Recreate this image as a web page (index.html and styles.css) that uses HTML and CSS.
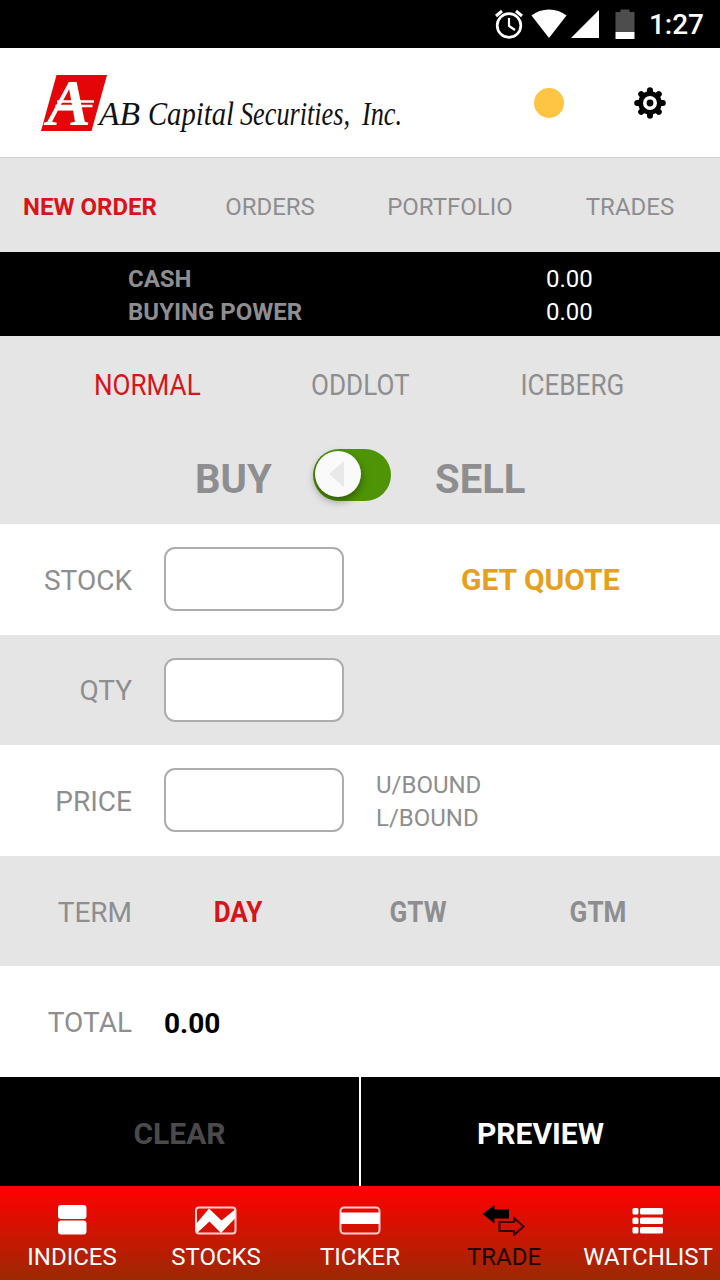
FILE: index.html
```
<!DOCTYPE html>
<html lang="en">
  <head>
    <meta charset="UTF-8" />
    <meta name="viewport" content="width=device-width, initial-scale=1.0" />
    <title>AB Capital Securities, Inc.</title>
    <link rel="stylesheet" href="styles.css">
  </head>
  <body>
    <div class="status-bar">
      <svg class="status-icons" width="145" height="48" viewBox="0 0 145 48">
        <g fill="none" stroke="#fff">
          <circle cx="15" cy="25.500" r="11.800" stroke-width="2.700" />
          <path d="M15 18v8l6 4" stroke-width="2.200" />
          <path d="M2 16l6-5M28 16l-6-5" stroke-width="3" />
        </g>
        <path d="M37.500 15.500C47 7.500 63 7.500 72.500 15.500L55 38z" fill="#fff" />
        <path d="M77 38h28V10z" fill="#fff" />
        <path d="M121.500 12h5v-2.500h9V12h5v20h-19z" fill="#4d4d4d" />
        <path d="M121.500 32h19v7h-19z" fill="#fff" />
      </svg>
      <span class="clock">1:27</span>
    </div>

    <header class="header">
      <svg class="logo" width="366" height="100" viewBox="0 0 366 100">
        <path d="M16.500 22H67L51.500 78H1z" fill="#e30508" />
        <text class="logo-mark" x="7" y="72" textLength="44" lengthAdjust="spacingAndGlyphs">A</text>
        <path d="M17 48.500h37M15.500 53h37" stroke="#fff" stroke-width="2.400" />
        <g class="logo-name">
          <text x="59" y="72" textLength="41" lengthAdjust="spacingAndGlyphs">AB</text>
          <text x="108" y="72" textLength="86" lengthAdjust="spacingAndGlyphs">Capital</text>
          <text x="200" y="72" textLength="110" lengthAdjust="spacingAndGlyphs">Securities,</text>
          <text x="322" y="72" textLength="40" lengthAdjust="spacingAndGlyphs">Inc.</text>
        </g>
      </svg>
      <span class="connection"></span>
      <svg class="gear" width="32" height="32" viewBox="-16 -16 32 32">
        <g stroke="#000" stroke-width="6" stroke-linecap="round">
          <path d="M0-12.800V12.800M-12.800 0H12.800M-8.800-8.800L8.800 8.800M-8.800 8.800L8.800-8.800" />
        </g>
        <circle r="11.800" />
        <circle r="5.200" fill="none" stroke="#fff" stroke-width="3.600" />
      </svg>
    </header>

    <nav class="tabs">
      <a class="active">NEW ORDER</a>
      <a>ORDERS</a>
      <a>PORTFOLIO</a>
      <a>TRADES</a>
    </nav>

    <div class="balance">
      <b>CASH</b><span>0.00</span>
      <b>BUYING POWER</b><span>0.00</span>
    </div>

    <div class="order-type">
      <div class="types">
        <span class="condensed active">NORMAL</span>
        <span class="condensed">ODDLOT</span>
        <span class="condensed">ICEBERG</span>
      </div>
      <div class="side">
        <b class="buy">BUY</b>
        <div class="toggle">
          <div class="knob"><div class="arrow"></div></div>
        </div>
        <b class="sell">SELL</b>
      </div>
    </div>

    <form class="order-form">
      <div class="row">
        <label for="stock">STOCK</label>
        <input type="text" id="stock" />
        <b class="quote">GET QUOTE</b>
      </div>
      <div class="row">
        <label for="qty">QTY</label>
        <input type="text" id="qty" />
      </div>
      <div class="row">
        <label for="price">PRICE</label>
        <input type="text" id="price" />
        <div class="bounds">
          <div>U/BOUND</div>
          <div>L/BOUND</div>
        </div>
      </div>
      <div class="row">
        <label>TERM</label>
        <div class="terms">
          <b class="condensed active">DAY</b>
          <b class="condensed">GTW</b>
          <b class="condensed">GTM</b>
        </div>
      </div>
      <div class="row">
        <label>TOTAL</label>
        <b class="total">0.00</b>
      </div>
    </form>

    <div class="actions">
      <div class="clear">CLEAR</div>
      <div class="preview">PREVIEW</div>
    </div>

    <nav class="bottom-nav">
      <a>
        <svg width="44" height="34" viewBox="0 0 44 34">
          <rect x="8" y="3" width="28.500" height="14" rx="3" fill="#fff" />
          <rect x="8" y="18.500" width="28.500" height="14" rx="3" fill="#fff" />
        </svg>
        <span>INDICES</span>
      </a>
      <a>
        <svg width="44" height="34" viewBox="0 0 44 34">
          <rect x="2" y="5.500" width="39.500" height="26" rx="3" fill="none" stroke="#ffd0cc" stroke-width="2" />
          <path d="M2 22L15 6.500L27.500 18.500L41 7.500V16.500L27 31L15.500 19.500L3 31z" fill="#fff" />
        </svg>
        <span>STOCKS</span>
      </a>
      <a>
        <svg width="44" height="34" viewBox="0 0 44 34">
          <rect x="2.500" y="5.500" width="39" height="26" rx="3.500" fill="none" stroke="#ffd0cc" stroke-width="2" />
          <path d="M2.500 10.500h39v11.500h-39z" fill="#fff" />
        </svg>
        <span>TICKER</span>
      </a>
      <a class="current">
        <svg width="44" height="34" viewBox="0 0 44 34">
          <path d="M0.500 12L12.500 3V7.500H27V16.500H12.500V21.500z" fill="#000" />
          <path d="M17.500 20H32V16L41.500 24.500L32 33V29H17.500z" fill="none" stroke="#300" stroke-width="2" />
        </svg>
        <span>TRADE</span>
      </a>
      <a>
        <svg width="44" height="34" viewBox="0 0 44 34">
          <g fill="#fff">
            <rect x="6.500" y="6" width="6" height="6.500" rx="1.500" />
            <rect x="14" y="6" width="23" height="6.500" rx="1.500" />
            <rect x="6.500" y="15.500" width="6" height="6.500" rx="1.500" />
            <rect x="14" y="15.500" width="23" height="6.500" rx="1.500" />
            <rect x="6.500" y="25" width="6" height="6.500" rx="1.500" />
            <rect x="14" y="25" width="23" height="6.500" rx="1.500" />
          </g>
        </svg>
        <span>WATCHLIST</span>
      </a>
    </nav>
  </body>
</html>
```
FILE: styles.css
```
* {
  box-sizing: border-box;
}
body {
  font-family: Roboto, "Liberation Sans", sans-serif;
  margin: 0;
  height: 1280px;
  display: flex;
  flex-direction: column;
  overflow: hidden;
  background-color: #fff;
  color: #8e8e90;
}
.status-bar {
  height: 48px;
  display: flex;
  align-items: center;
  justify-content: flex-end;
  padding-right: 16px;
  gap: 10px;
  background-color: #000;
  color: #fff;
}
.clock {
  font-size: 28px;
  font-weight: 500;
  padding-top: 1px;
}
.header {
  height: 110px;
  display: flex;
  align-items: center;
  padding-left: 40px;
  border-bottom: 1px solid #cfcfcf;
}
.logo {
  overflow: visible;
}
.logo-mark {
  font: italic bold 66px "Liberation Serif", serif;
  fill: #fff;
}
.logo-name {
  font: italic 34px "Liberation Serif", serif;
  fill: #111;
}
.connection {
  width: 30px;
  height: 30px;
  margin-left: 128px;
  border-radius: 50%;
  background-color: #fec544;
}
.gear {
  margin-left: 70px;
}
.tabs {
  height: 94px;
  display: grid;
  grid-template-columns: repeat(4, 1fr);
  align-items: center;
  padding-top: 3px;
  text-align: center;
  font-size: 24px;
  background-color: #e5e5e5;
}
.active {
  color: #d9131a;
}
.tabs .active {
  font-weight: bold;
}
.balance {
  height: 84px;
  display: grid;
  grid-template-columns: 418px 1fr;
  grid-auto-rows: 33px;
  align-content: center;
  align-items: center;
  padding: 2px 0 0 128px;
  font-size: 24px;
  background-color: #000;
}
.balance span {
  color: #fff;
}
.order-type {
  height: 188px;
  background-color: #e5e5e5;
}
.types {
  height: 96px;
  display: grid;
  grid-template-columns: repeat(3, 1fr);
  align-items: center;
  padding: 0 41px;
  text-align: center;
  font-size: 30px;
}
.condensed {
  transform: scaleX(0.87);
}
.side {
  height: 86px;
  display: flex;
  align-items: center;
  padding-left: 195px;
  font-size: 40px;
}
.buy {
  width: 118px;
  padding-top: 8px;
}
.sell {
  margin-left: 44px;
  padding-top: 8px;
}
.toggle {
  width: 78px;
  height: 52px;
  padding: 2px;
  border-radius: 26px;
  background-color: #4f9406;
}
.knob {
  width: 46px;
  height: 46px;
  display: flex;
  align-items: center;
  justify-content: center;
  border-radius: 50%;
  background-color: #fafafa;
  box-shadow: 0 4px 8px rgba(0, 0, 0, 0.4);
}
.arrow {
  margin-right: 4px;
  border: solid transparent;
  border-width: 13px 15px 13px 0;
  border-right-color: #e9e9e9;
}
.order-form {
  height: 553px;
  display: grid;
  grid-template-rows: repeat(5, 1fr);
}
.row {
  display: flex;
  align-items: center;
  font-size: 28px;
}
.row:nth-child(even) {
  background-color: #e5e5e5;
}
.row label {
  width: 132px;
  padding-top: 2px;
  text-align: right;
}
.row input {
  width: 180px;
  height: 64px;
  margin-left: 32px;
  border: 2px solid #adadad;
  border-radius: 11px;
  background-color: #fff;
}
.quote {
  margin-left: 117px;
  padding-top: 1px;
  font-size: 30px;
  color: #e6a020;
}
.bounds {
  margin-left: 32px;
  padding-top: 4px;
  font-size: 24px;
  line-height: 33px;
}
.terms {
  width: 540px;
  display: grid;
  grid-template-columns: repeat(3, 1fr);
  margin-left: 16px;
  padding-top: 1px;
  text-align: center;
  font-size: 30px;
}
.total {
  margin-left: 32px;
  padding-top: 3px;
  color: #000;
}
.actions {
  height: 109px;
  display: grid;
  grid-template-columns: 359px 361px;
  font-size: 30px;
  font-weight: bold;
  background-color: #000;
}
.actions div {
  display: flex;
  align-items: center;
  justify-content: center;
  padding-top: 4px;
}
.clear {
  color: #4a4a4a;
}
.preview {
  color: #fff;
  border-left: 2px solid #fff;
}
.bottom-nav {
  height: 94px;
  display: grid;
  grid-template-columns: repeat(5, 1fr);
  font-size: 24px;
  color: #fff;
  background: linear-gradient(#ff0000, #9c2903);
}
.bottom-nav a {
  display: flex;
  flex-direction: column;
  align-items: center;
  padding-top: 16px;
  gap: 7px;
}
.bottom-nav .current {
  color: #1d0000;
}
```
